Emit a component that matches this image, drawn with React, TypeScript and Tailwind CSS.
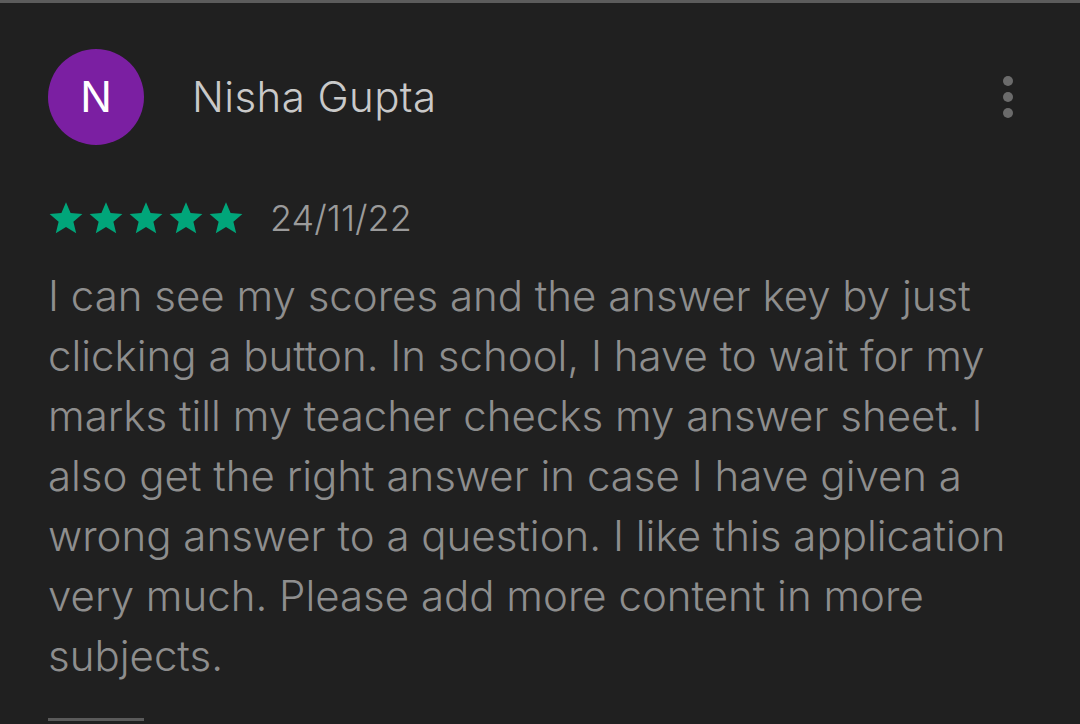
import React from "react";

const lines = [
  "I can see my scores and the answer key by just",
  "clicking a button. In school, I have to wait for my",
  "marks till my teacher checks my answer sheet. I",
  "also get the right answer in case I have given a",
  "wrong answer to a question. I like this application",
  "very much. Please add more content in more",
  "subjects.",
];

const Star = () => (
  <svg width="36" height="34" viewBox="0 0 24 23" className="shrink-0">
    <path
      d="M12 0.8l3.1 7.4 8 0.6-6.1 5.2 1.9 7.8L12 17.6l-6.9 4.2 1.9-7.8L0.9 8.8l8-0.6z"
      fill="#01a67a"
    />
  </svg>
);

export default function App() {
  return (
    <div
      className="w-[1080px] h-[724px] overflow-hidden bg-[#202020] border-t-[3px] border-[#5c5c5c]"
      style={{ fontFamily: "Inter, 'Noto Sans', sans-serif" }}
    >
      {/* Header: avatar, name, menu */}
      <div className="flex items-center pl-[48px] pr-[67px] pt-[46px]">
        <div className="w-[96px] h-[96px] rounded-full bg-[#7b1fa2] flex items-center justify-center text-white text-[42px] leading-none">
          N
        </div>
        <div className="ml-[48px] text-[#c9c9c9] text-[42px] leading-none font-light tracking-[0.4px]">
          Nisha Gupta
        </div>
        <div className="ml-auto flex flex-col gap-[6px]">
          <span className="block w-[10px] h-[10px] rounded-full bg-[#6b6b6b]" />
          <span className="block w-[10px] h-[10px] rounded-full bg-[#6b6b6b]" />
          <span className="block w-[10px] h-[10px] rounded-full bg-[#6b6b6b]" />
        </div>
      </div>

      {/* Rating + date */}
      <div className="flex items-center pl-[48px] mt-[55px]">
        <div className="flex gap-[4px]">
          <Star />
          <Star />
          <Star />
          <Star />
          <Star />
        </div>
        <div className="ml-[26px] text-[#9b9b9b] text-[36px] leading-none font-light">24/11/22</div>
      </div>

      {/* Review body */}
      <div className="pl-[48px] mt-[30px] text-[#8e8e8e] text-[42px] leading-[60px] font-light">
        {lines.map((l) => (
          <div key={l} className="whitespace-nowrap">
            {l}
          </div>
        ))}
      </div>

      <div className="ml-[48px] mt-[32px] w-[96px] h-[3px] bg-[#5a5a5a]" />
    </div>
  );
}
